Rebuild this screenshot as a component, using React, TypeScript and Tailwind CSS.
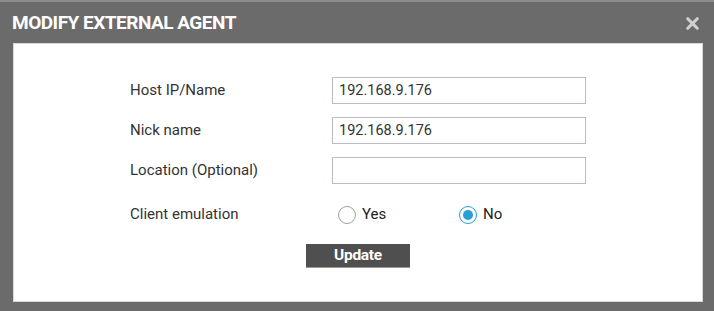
import { X } from 'lucide-react';

const Radio = ({ label, checked }: { label: string; checked?: boolean }) => (
  <label className="flex items-center gap-[6px] w-[121px]">
    <span
      className={`w-[18px] h-[18px] rounded-full border flex items-center justify-center bg-white ${
        checked ? 'border-[#2a9fd6]' : 'border-[#a0a0a0]'
      }`}
    >
      {checked && <span className="w-[10px] h-[10px] rounded-full bg-[#2a9fd6]" />}
    </span>
    <span className="text-[15px] text-[#222]">{label}</span>
  </label>
);

const Field = ({ label, value }: { label: string; value?: string }) => (
  <div className="flex items-center h-[27px]">
    <span className="w-[202px] text-[15px] text-[#333]">{label}</span>
    <div className="w-[254px] h-[27px] border border-[#b8bcc4] px-[6px] flex items-center text-[14.5px] text-[#333]">
      {value}
    </div>
  </div>
);

export default function App() {
  return (
    <div
      className="w-[714px] h-[311px] bg-[#6b6b6b] border-t-2 border-[#8a8a8a] flex flex-col"
      style={{ fontFamily: 'Roboto, "Liberation Sans", sans-serif' }}
    >
      <div className="h-[41px] flex items-center justify-between pl-[12px] pr-[12px] pt-[1px]">
        <h1 className="text-white font-bold text-[19px] tracking-[-0.5px]">MODIFY EXTERNAL AGENT</h1>
        <X className="w-[19px] h-[19px] text-[#d0d0d0]" strokeWidth={4} />
      </div>
      <div className="mx-[13px] w-[690px] h-[259px] bg-white border border-[#d8d8d8] pt-[33px] pl-[116px] flex flex-col">
        <div className="flex flex-col gap-[13px]">
          <Field label="Host IP/Name" value="192.168.9.176" />
          <Field label="Nick name" value="192.168.9.176" />
          <Field label="Location (Optional)" />
        </div>
        <div className="flex items-center h-[27px] mt-[17px]">
          <span className="w-[208px] text-[15px] text-[#333]">Client emulation</span>
          <Radio label="Yes" />
          <Radio label="No" checked />
        </div>
        <div className="mt-[15px] pl-[176px]">
          <button className="w-[104px] h-[24px] bg-[#4f4f4f] border-b border-[#9a9a9a] text-white font-bold text-[15.5px] leading-none tracking-[-0.3px]">
            Update
          </button>
        </div>
      </div>
    </div>
  );
}
